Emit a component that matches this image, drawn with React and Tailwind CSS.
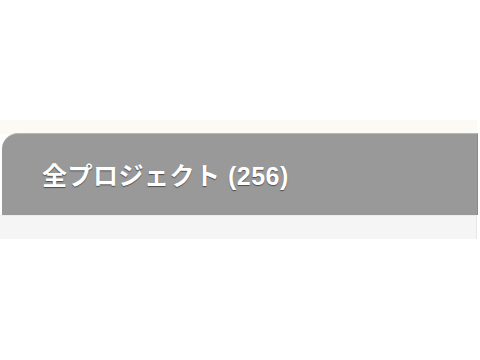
export default function App() {
  return (
    <div className="w-[480px] h-[360px] bg-white overflow-hidden pt-[120px]">
      <div className="w-[477px] h-[14px] bg-[#fbfaf5]" />
      <div className="ml-[2px] w-[476px] h-[82px] -mt-[1px] bg-[#999999] rounded-tl-[16px] border-t border-[#b8b8b8] border-r border-r-[#8a8a8a] flex items-center pl-[40px]">
        <h2
          className="text-white font-bold text-[25px] leading-none pt-[3px] tracking-[0.5px] [text-shadow:0_1px_1px_rgba(0,0,0,0.5)]"
          style={{ fontFamily: '"Liberation Sans", "Noto Sans CJK JP", sans-serif' }}
        >
          全プロジェクト (256)
        </h2>
      </div>
      <div className="w-[477px] h-[24px] bg-[#f5f5f5] border-t border-[#ececec] border-r border-r-[#e6e6e6]" />
    </div>
  );
}
